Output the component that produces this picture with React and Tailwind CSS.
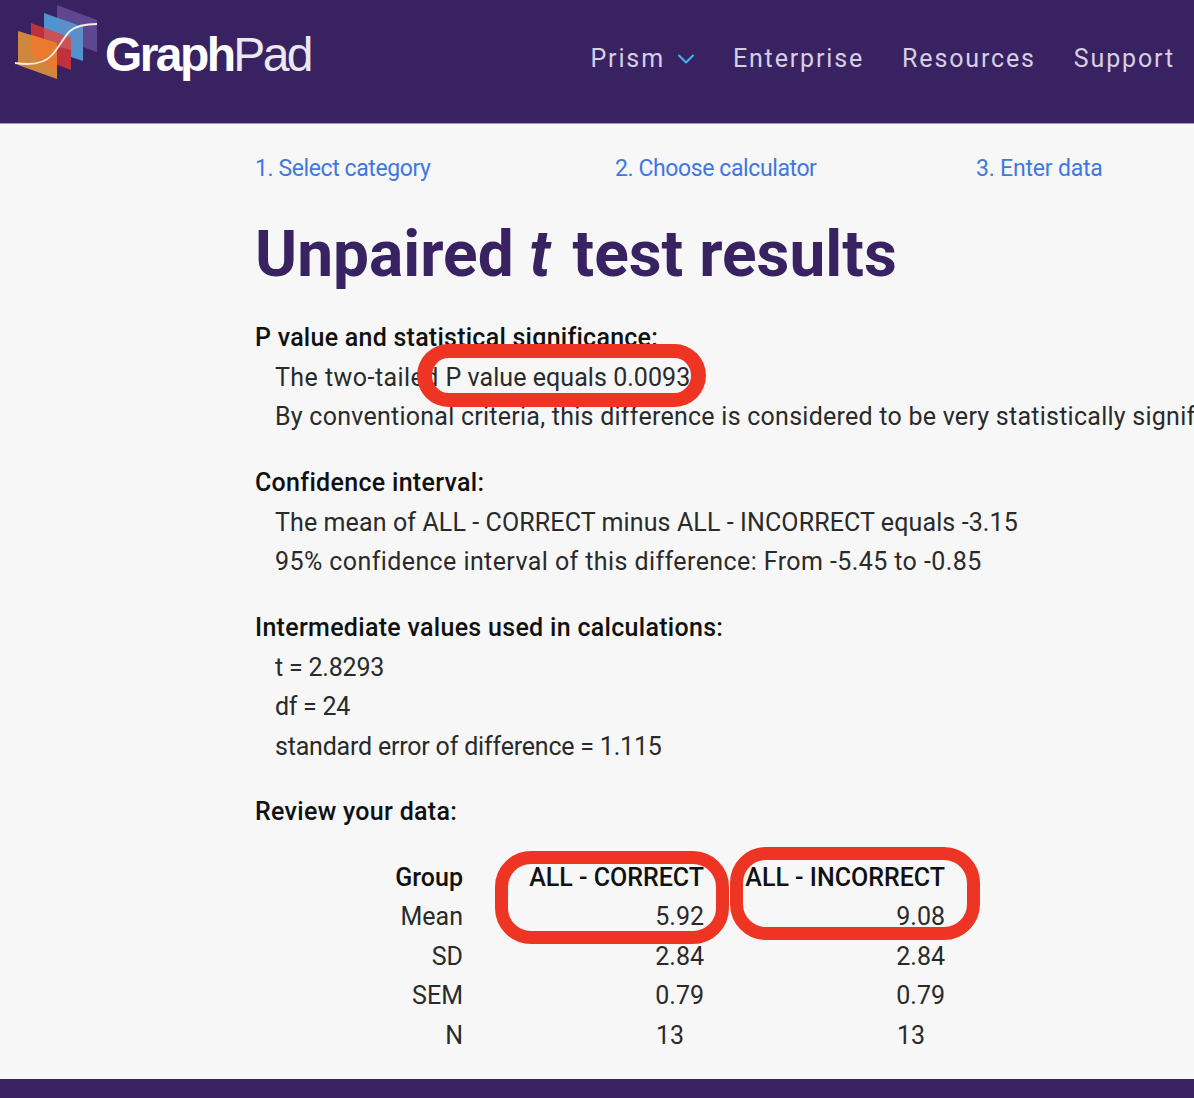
import React from "react";
import { ChevronDown } from "lucide-react";

const navItems = ["Enterprise", "Resources", "Support"];

const sections = [
  {
    title: "Confidence interval:",
    lines: [
      { text: "The mean of ALL - CORRECT minus ALL - INCORRECT equals -3.15", cls: "tracking-[0.11px]" },
      { text: "95% confidence interval of this difference: From -5.45 to -0.85", cls: "tracking-[0.41px]" },
    ],
  },
  {
    title: "Intermediate values used in calculations:",
    lines: [
      { text: "t = 2.8293", cls: "tracking-[-0.2px]" },
      { text: "df = 24", cls: "tracking-[-0.3px]" },
      { text: "standard error of difference = 1.115", cls: "tracking-[-0.2px]" },
    ],
  },
];

const rows = [
  ["Mean", "5.92", "9.08"],
  ["SD", "2.84", "2.84"],
  ["SEM", "0.79", "0.79"],
];

function Logo() {
  return (
    <svg width="105" height="90" viewBox="0 0 105 90" className="shrink-0">
      <polygon points="57,5 97,20 97,52 57,38" fill="#5f4690" />
      <polygon points="44,13 83,27 83,61 44,48" fill="#4f93cf" />
      <polygon points="57,18 83,27 83,52 57,43" fill="#5a8fca" />
      <polygon points="31,23 71,38 71,70 31,55" fill="#bf323c" />
      <polygon points="44,28 71,38 71,50 44,43" fill="#c9525a" />
      <polygon points="18,31 57,43 57,79 18,65" fill="#cf8740" />
      <polygon points="31,35 57,43 57,72 31,55" fill="#e97a30" />
      <path d="M15 63 C28 65 43 65 52 55 C60 46 63 38 70 31 C76 26 85 24 97 24" fill="none" stroke="#f4eee8" strokeWidth="1.8" />
    </svg>
  );
}

function Header() {
  return (
    <header className="h-[124px] shrink-0 bg-[#392261] border-b border-[#a994c8] flex items-start overflow-hidden">
      <div className="flex items-start">
        <Logo />
        <div className="pt-[24px] text-[48px] leading-[62px] tracking-[-2.6px] text-white font-['Liberation_Sans',sans-serif]">
          <span className="font-bold">Graph</span>
          <span className="font-light opacity-90">Pad</span>
        </div>
      </div>
      <nav className="ml-auto pr-[19px] pt-[42px] flex items-center gap-[38px] text-[25px] leading-[34px] tracking-[1.85px] text-[#d6cfe2]">
        <div className="flex items-center mr-[-5px]">
          <span>Prism</span>
          <ChevronDown size={28} strokeWidth={1.8} className="text-[#3fb4e6] ml-[7px]" />
        </div>
        {navItems.map((item) => (
          <span key={item}>{item}</span>
        ))}
      </nav>
    </header>
  );
}

function TableRow({ label, a, b, bold, shift }) {
  return (
    <div className={`grid grid-cols-[208px_241px_241px] h-[39.5px] leading-[39.5px] ${bold ? "font-medium text-[#111]" : ""}`}>
      <span className="text-right">{label}</span>
      <span className={`text-right ${shift ? "pr-[20px]" : ""}`}>{a}</span>
      <span className={`text-right ${shift ? "pr-[20px]" : ""}`}>{b}</span>
    </div>
  );
}

export default function App() {
  return (
    <div className="w-[1194px] h-[1098px] relative overflow-hidden flex flex-col bg-[#f7f7f7] font-['Roboto',sans-serif] text-[#2a2a2a]">
      <Header />

      <main className="flex-1 pl-[255px] whitespace-nowrap text-[25px] leading-[39.5px]">
        <div className="pt-[25px] flex text-[#3f78e0] text-[23px] leading-[40px] tracking-[-0.4px]">
          <a className="w-[360px]">1. Select category</a>
          <a className="w-[361px]">2. Choose calculator</a>
          <a className="tracking-[-0.2px]">3. Enter data</a>
        </div>

        <h1 className="mt-[26px] text-[64px] leading-[80px] font-bold text-[#392261]">
          Unpaired <em className="italic mr-[6px]">t</em> test results
        </h1>

        <section className="mt-[23px]">
          <h2 className="font-medium text-[#111] tracking-[0.25px]">P value and statistical significance:</h2>
          <p className="pl-5">
            <span className="tracking-[0.45px]">The two-tailed </span>
            <span className="tracking-[0.05px]">P value equals 0.0093</span>
          </p>
          <p className="pl-5 tracking-[0.25px]">By conventional criteria, this difference is considered to be very statistically significant.</p>
        </section>

        {sections.map((s) => (
          <section key={s.title} className="mt-[26.5px]">
            <h2 className="font-medium text-[#111] tracking-[0.3px]">{s.title}</h2>
            {s.lines.map((line) => (
              <p key={line.text} className={`pl-5 ${line.cls}`}>{line.text}</p>
            ))}
          </section>
        ))}

        <section className="mt-[26px]">
          <h2 className="font-medium text-[#111] tracking-[0.3px]">Review your data:</h2>
          <div className="mt-[26px]">
            <TableRow label="Group" a="ALL - CORRECT" b="ALL - INCORRECT" bold />
            {rows.map((r) => (
              <TableRow key={r[0]} label={r[0]} a={r[1]} b={r[2]} />
            ))}
            <TableRow label="N" a="13" b="13" shift />
          </div>
        </section>
      </main>

      <footer className="h-[19px] shrink-0 bg-[#392261]" />

      {/* red marker annotations drawn on top of the screenshot */}
      <div className="absolute left-[417px] top-[344px] w-[289px] h-[63px] rounded-[32px] border-x-[15px] border-y-[14px] border-[#ee3524]" />
      <div className="absolute left-[495px] top-[851px] w-[234px] h-[93px] rounded-[36px] border-[13px] border-[#ee3524]" />
      <div className="absolute left-[730px] top-[847px] w-[250px] h-[93px] rounded-[36px] border-[13px] border-[#ee3524]" />
    </div>
  );
}
